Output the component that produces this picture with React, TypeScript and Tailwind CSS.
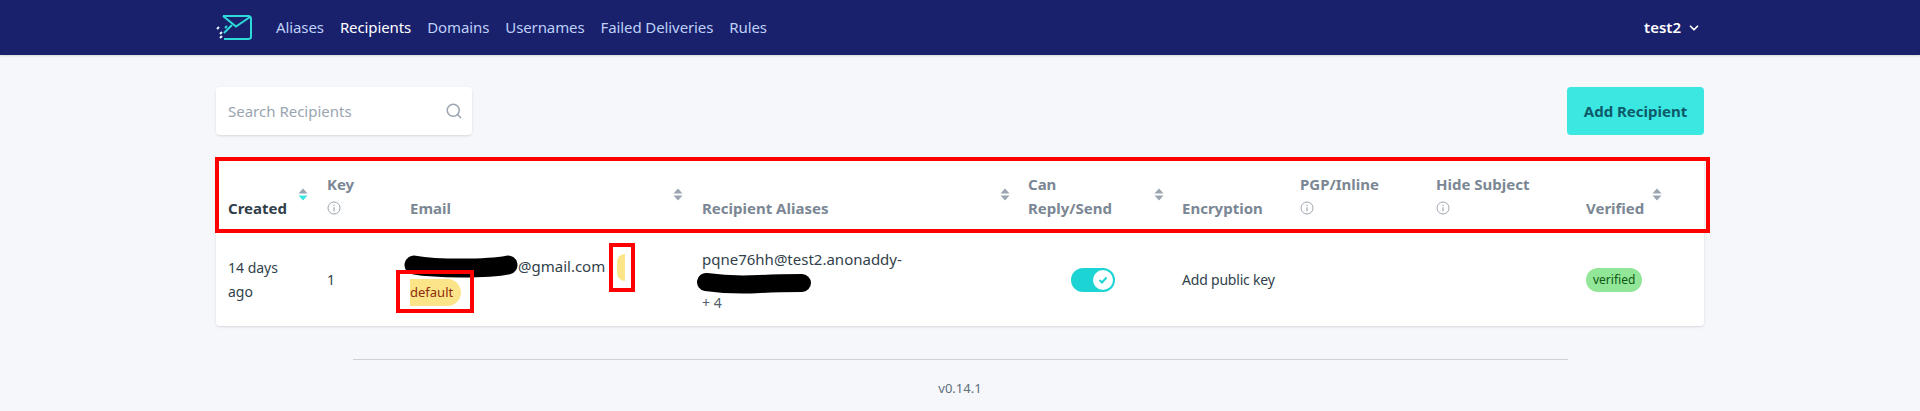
import React from 'react';
import { Search, ChevronDown } from 'lucide-react';

const navLinks = ['Aliases', 'Recipients', 'Domains', 'Usernames', 'Failed Deliveries', 'Rules'];

const Sort = ({ active = false }: { active?: boolean }) => (
  <svg width="10" height="13" viewBox="0 0 10 13" className="mt-[30px] shrink-0">
    <path d="M5 0.5 L9.5 5.5 H0.5 Z" fill="#9aa5b1" />
    <path d="M5 12.5 L0.5 7.5 H9.5 Z" fill={active ? '#3ae7e1' : '#9aa5b1'} />
  </svg>
);

const Info = () => (
  <div className="flex h-6 items-center">
    <svg width="14" height="14" viewBox="0 0 14 14" fill="none" stroke="#9aa5b1">
      <circle cx="7" cy="7" r="6" strokeWidth="1" />
      <path d="M7 6.2 V10.2 M7 3.8 V5" strokeWidth="1.2" />
    </svg>
  </div>
);

const Head = ({ top, bottom, info }: { top?: string; bottom?: string; info?: boolean }) => (
  <div className="flex flex-col justify-end">
    {top && <span className="leading-6">{top}</span>}
    {bottom && <span className="leading-6">{bottom}</span>}
    {info && <Info />}
  </div>
);

export default function App() {
  return (
    <div className="h-[411px] overflow-hidden bg-[#f5f7fa] font-['Noto_Sans',sans-serif] text-[#323f4b]">
      <nav className="h-[55px] bg-[#19216c] shadow-sm">
        <div className="mx-auto flex h-full w-[1488px] items-center">
          <svg width="38" height="28" viewBox="0 0 38 28" fill="none" className="mr-[22px]">
            <path d="M7 2 H32 Q35 2 35 5 V23 Q35 25 32 25 H8" stroke="#2dd9d9" strokeWidth="2" />
            <path d="M7 2 L20 12.5 L34 3" stroke="#2dd9d9" strokeWidth="2" />
            <path d="M11 12 L9 14 M16 11 L8 19" stroke="#2dd9d9" strokeWidth="2" />
            <path d="M1 15 L3 13 M6 18 L4 20 M4 24 L6 22" stroke="#e4f7ff" strokeWidth="2" />
          </svg>
          <div className="flex gap-4 text-[15px] tracking-[-0.1px] text-[#bed0f7]">
            {navLinks.map((l) => (
              <a key={l} className={l === 'Recipients' ? 'text-white' : ''}>{l}</a>
            ))}
          </div>
          <div className="ml-auto mr-[3px] flex items-center gap-[6px] text-[15px] font-semibold text-white">
            test2
            <ChevronDown size={14} strokeWidth={3} />
          </div>
        </div>
      </nav>

      <main className="mx-auto w-[1488px]">
        <div className="flex justify-between pt-8">
          <div className="flex h-12 w-64 items-center justify-between rounded bg-white pl-3 pr-[9px] shadow">
            <span className="text-[15px] text-[#9aa5b1]">Search Recipients</span>
            <Search size={18} className="text-[#9aa5b1]" />
          </div>
          <button className="h-12 w-[137px] rounded bg-[#3ae7e1] text-[15px] font-bold text-[#0e5a6a]">Add Recipient</button>
        </div>

        <div className="relative mt-[23px] rounded bg-white shadow">
          <div className="grid h-[75px] grid-cols-[99px_83px_292px_326px_154px_118px_136px_150px_118px] pb-[13px] pl-3 text-[15px] font-bold text-[#7b8794]">
            <div className="flex justify-between pr-[19px]">
              <span className="self-end leading-6 text-[#323f4b]">Created</span>
              <Sort active />
            </div>
            <Head top="Key" info />
            <div className="flex justify-between pr-[19px]">
              <Head bottom="Email" />
              <Sort />
            </div>
            <div className="flex justify-between pr-[18px]">
              <Head bottom="Recipient Aliases" />
              <Sort />
            </div>
            <div className="flex justify-between pr-[18px]">
              <Head top="Can" bottom="Reply/Send" />
              <Sort />
            </div>
            <Head bottom="Encryption" />
            <Head top="PGP/Inline" info />
            <Head top="Hide Subject" info />
            <div className="flex justify-between pr-[42px]">
              <Head bottom="Verified" />
              <Sort />
            </div>
          </div>

          <div className="grid h-[93px] grid-cols-[99px_83px_292px_326px_154px_118px_136px_150px_118px] items-center pl-3 text-sm">
            <div className="leading-6">14 days<br />ago</div>
            <div>1</div>
            <div>
              <div className="pl-[108px] text-[15px] leading-6">@gmail.com</div>
              <span className="mt-[1px] inline-block rounded-r-full bg-[#fce588] pr-[8px] text-[13px] leading-[27px] text-[#8d2b0b]">default</span>
            </div>
            <div>
              <div className="text-[15px] leading-6">pqne76hh@test2.anonaddy-</div>
              <div className="h-[22px]" />
              <div className="text-sm leading-5 text-[#52606d]">+ 4</div>
            </div>
            <div className="flex justify-end pr-[67px]">
              <div className="flex h-6 w-11 items-center justify-end rounded-full bg-[#1cd4d4] pr-[2px]">
                <div className="flex h-5 w-5 items-center justify-center rounded-full bg-white">
                  <svg width="10" height="8" viewBox="0 0 10 8" fill="none">
                    <path d="M1.5 4 L4 6.5 L8.5 1.5" stroke="#1cd4d4" strokeWidth="2" />
                  </svg>
                </div>
              </div>
            </div>
            <div className="col-span-3 tracking-[-0.2px]">Add public key</div>
            <div>
              <span className="inline-block rounded-full bg-[#91e697] px-[7px] text-xs leading-6 text-[#0e5814]">verified</span>
            </div>
          </div>

          {/* redaction scribbles and red annotation boxes sit over the table */}
          <svg width="124" height="24" viewBox="0 0 124 24" fill="none" className="absolute left-[185px] top-[97px]">
            <path d="M13 10 C30 13 44 13 60 13 C76 13 92 13 107 10" stroke="#000" strokeWidth="19" strokeLinecap="round" />
          </svg>
          <svg width="122" height="24" viewBox="0 0 122 24" fill="none" className="absolute left-[478px] top-[113px]">
            <path d="M12 11 C26 13 48 14 66 13 C84 12 96 12 108 12" stroke="#000" strokeWidth="18" strokeLinecap="round" />
          </svg>
          <div className="absolute left-[401px] top-[96px] h-[27px] w-2 rounded-l-full bg-[#fce588]" />
          <div className="absolute -left-px -top-px h-[76px] w-[1495px] border-4 border-[#ff0000]" />
          <div className="absolute left-[180px] top-[112px] h-[43px] w-[78px] border-4 border-[#ff0000]" />
          <div className="absolute left-[393px] top-[85px] h-[49px] w-[26px] border-4 border-[#ff0000]" />
        </div>

        <div className="mx-auto mt-[33px] w-[1215px] border-t border-[#cbd2d9] pt-[19px] text-center text-[13px] text-[#616e7c]">v0.14.1</div>
      </main>
    </div>
  );
}
